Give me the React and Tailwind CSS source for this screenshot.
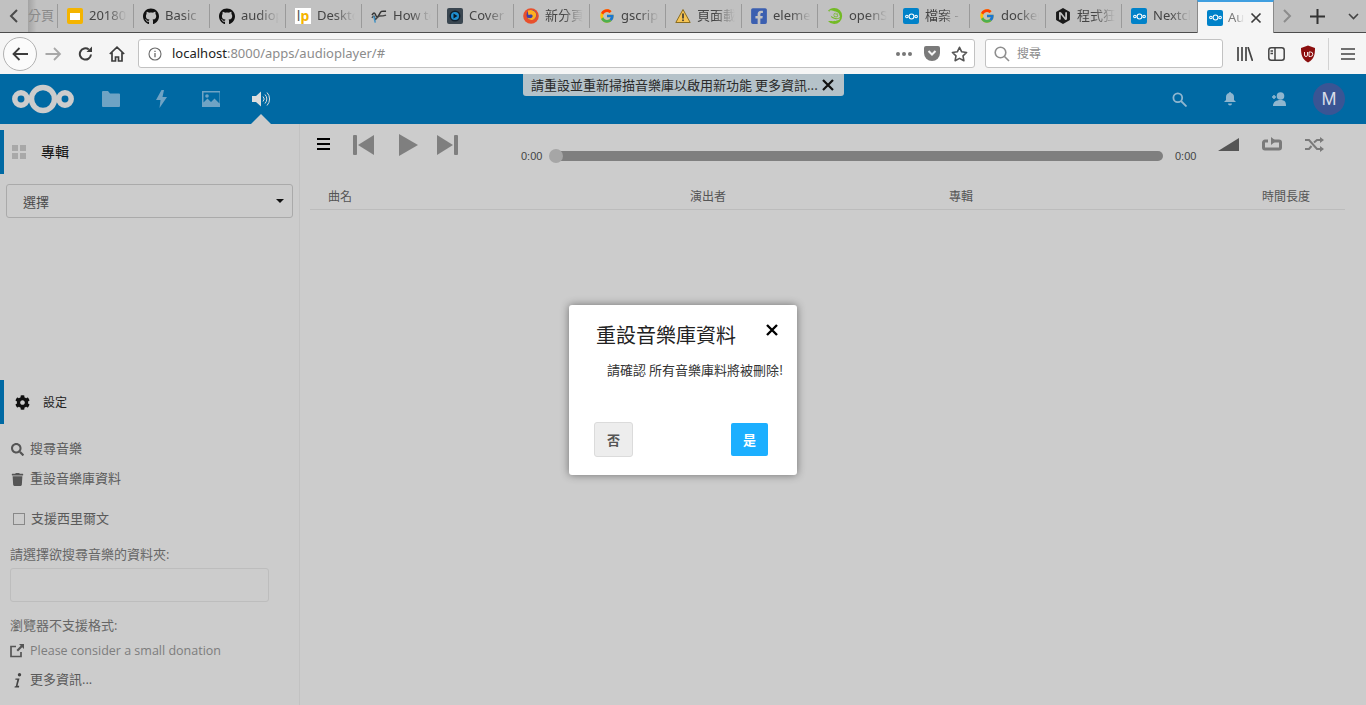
import React from "react";
import { FaGithub, FaFacebookSquare, FaTrash, FaCog, FaSearch } from "react-icons/fa";
import { FcGoogle } from "react-icons/fc";
import { SiOpensuse, SiNginx } from "react-icons/si";

const ncFont = { fontFamily: '"Open Sans","Noto Sans CJK TC",sans-serif' };

function NcLogo({ w = 62, h = 30, color = "#ccc", sw = 5.5 }) {
  return (
    <svg width={w} height={h} viewBox="0 0 62 30" fill="none" stroke={color} strokeWidth={sw}>
      <circle cx="9" cy="15" r="6.2" />
      <circle cx="31" cy="15" r="11.5" />
      <circle cx="53" cy="15" r="6.2" />
    </svg>
  );
}
function NcFav() {
  return (
    <span className="w-4 h-4 rounded-[2px] bg-[#0082c9] flex items-center justify-center">
      <NcLogo w={13} h={7} color="#fff" sw={5} />
    </span>
  );
}
function Slides() {
  return (
    <span className="w-4 h-4 rounded-[2px] bg-[#f4b400] flex items-center justify-center">
      <span className="w-[10px] h-[7px] bg-white block" />
    </span>
  );
}
function Lp() {
  return (
    <span className="w-4 h-4 bg-white flex items-center justify-center text-[14px] leading-none font-bold text-[#f4b400]" style={{ fontFamily: '"Noto Sans",sans-serif' }}>
      <span className="text-[#555] font-normal">l</span>p
    </span>
  );
}
function Wave() {
  return (
    <svg width="17" height="16" viewBox="0 0 17 16" fill="none" strokeWidth="1.5">
      <path d="M1 7c2-3 3-3 4 0s2 3 4-1 3-3 7-3" stroke="#333" />
      <path d="M1 10c2-3 3-2 3 1s3-3 5-3 4 0 7-1" stroke="#444" />
      <path d="M3 8l1.500 7" stroke="#3a8fc4" />
    </svg>
  );
}
function Cover() {
  return (
    <span className="w-4 h-4 rounded-[2px] bg-[#3a4650] flex items-center justify-center">
      <svg width="12" height="12" viewBox="0 0 12 12"><circle cx="6" cy="6" r="5.500" fill="#10202e" /><circle cx="6" cy="6" r="4" fill="#1f8fd0" /><path d="M4.500 3.500v5L8.500 6Z" fill="#0c1a26" /></svg>
    </span>
  );
}
function Firefox() {
  return (
    <svg width="16" height="16" viewBox="0 0 16 16">
      <circle cx="8" cy="8" r="7.800" fill="#e8502c" />
      <circle cx="8.500" cy="7" r="5" fill="#3f3fa8" />
      <path d="M5 2.500c3-1.500 7 0 8 3 .8 3-1 6-4 6.500-2 .3-4-.8-4.500-2.500 1.500 1 3.500 1 4.500 0 1-1 .8-2.500-.5-3-1-.3-2 0-3 .5C5 6 5 4 5 2.500Z" fill="#ffb020" />
    </svg>
  );
}
function Warn() {
  return (
    <svg width="16" height="16" viewBox="0 0 16 16">
      <path d="M8 1.500 15.200 14.500H.8Z" fill="#f6c454" stroke="#8a6d20" strokeWidth="1" strokeLinejoin="round" />
      <rect x="7.200" y="5.500" width="1.600" height="5" fill="#333" />
      <rect x="7.200" y="11.500" width="1.600" height="1.600" fill="#333" />
    </svg>
  );
}

const tabs = [
  { icon: <Slides />, t: "20180" },
  { icon: <FaGithub size={17} color="#111" />, t: "Basic" },
  { icon: <FaGithub size={17} color="#111" />, t: "audiop" },
  { icon: <Lp />, t: "Desktop" },
  { icon: <Wave />, t: "How to" },
  { icon: <Cover />, t: "Cover" },
  { icon: <Firefox />, t: "新分頁" },
  { icon: <FcGoogle size={16} />, t: "gscript" },
  { icon: <Warn />, t: "頁面載" },
  { icon: <FaFacebookSquare size={18} color="#3b5fb0" />, t: "element" },
  { icon: <SiOpensuse size={16} color="#73ba25" />, t: "openSU" },
  { icon: <NcFav />, t: "檔案 -" },
  { icon: <FcGoogle size={16} />, t: "docker" },
  { icon: <SiNginx size={16} color="#1a1a1a" />, t: "程式狂" },
  { icon: <NcFav />, t: "Nextcloud" },
];

function TabBar() {
  return (
    <div className="h-[33px] bg-[#c1c1c1] border-b border-[#4d4d4d] flex text-[13px] text-[#444]" style={{ fontFamily: '"Noto Sans","Noto Sans CJK TC",sans-serif' }}>
      <div className="w-[28px] flex items-center justify-center">
        <svg width="10" height="14" viewBox="0 0 10 14" fill="none" stroke="#4a4a4a" strokeWidth="2"><path d="M8 1 2 7l6 6" /></svg>
      </div>
      <div className="w-[29px] h-[32px] flex items-center overflow-hidden text-[#8a8a8a] bg-gradient-to-r from-[#a3a3a3] to-[#c1c1c1] to-30%">
        <span className="whitespace-nowrap">分頁</span>
      </div>
      {tabs.map((x, i) => (
        <div key={i} className="w-[76px] h-[32px] flex items-center">
          <span className="w-px h-[24px] bg-[#9a9a9a]" />
          <span className="w-[16px] h-4 ml-[9px] flex items-center justify-center">{x.icon}</span>
          <span className="ml-[6px] w-[38px] overflow-hidden whitespace-nowrap [mask-image:linear-gradient(to_right,black_45%,transparent)]">{x.t}</span>
        </div>
      ))}
      <div className="w-[77px] h-[33px] bg-[#f5f5f5] border-t-2 border-[#3f9fe0] border-x border-x-[#8a8a8a] flex items-center pl-[9px]">
        <NcFav />
        <span className="ml-[5px] w-[16px] overflow-hidden text-[#7c7c7c] whitespace-nowrap [mask-image:linear-gradient(to_right,black_50%,transparent)]">Audio</span>
        <svg className="ml-[6px]" width="12" height="12" viewBox="0 0 12 12" stroke="#3d3d3d" strokeWidth="1.700"><path d="M1.500 1.500l9 9M10.500 1.500l-9 9" /></svg>
      </div>
      <div className="flex items-center h-[32px]">
        <svg className="ml-[8px]" width="10" height="14" viewBox="0 0 10 14" fill="none" stroke="#8c8c8c" strokeWidth="2"><path d="M2 1l6 6-6 6" /></svg>
        <svg className="ml-[18px]" width="15" height="15" viewBox="0 0 15 15" stroke="#333" strokeWidth="2"><path d="M7.500 0v15M0 7.500h15" /></svg>
        <svg className="ml-[23px]" width="11" height="7" viewBox="0 0 11 7" fill="none" stroke="#444" strokeWidth="1.600"><path d="M1 1l4.500 4.500L10 1" /></svg>
      </div>
    </div>
  );
}

function NavBar() {
  return (
    <div className="h-[41px] bg-[#f5f5f5] flex items-center" style={{ fontFamily: '"Noto Sans","Noto Sans CJK TC",sans-serif' }}>
      <div className="ml-[3px] w-[34px] h-[34px] rounded-full border border-[#b1b1b1] bg-[#fbfbfb] flex items-center justify-center">
        <svg width="16" height="14" viewBox="0 0 16 14" fill="none" stroke="#3d3d3d" strokeWidth="1.800"><path d="M7.500 1 1.500 7l6 6M1.500 7H16" /></svg>
      </div>
      <svg className="ml-[8px]" width="17" height="14" viewBox="0 0 16 14" fill="none" stroke="#a8a8a8" strokeWidth="1.800"><path d="M8.500 1l6 6-6 6M14.500 7H0" /></svg>
      <svg className="ml-[16px]" width="15" height="15" viewBox="0 0 15 15" fill="none" stroke="#3d3d3d" strokeWidth="2"><path d="M13 8.500A5.600 5.600 0 1 1 10.800 3.500" /><path d="M14 .5V6H8.500Z" fill="#3d3d3d" stroke="none" /></svg>
      <svg className="ml-[16px]" width="16" height="16" viewBox="0 0 16 16" fill="none" stroke="#3d3d3d" strokeWidth="1.700"><path d="M.8 8 8 1.200 15.200 8M3 6.500V15h3.500v-4h3v4H13V6.500" /></svg>
      <div className="ml-[13px] w-[837px] h-[29px] bg-white border border-[#c2c2c2] rounded-[3px] flex items-center">
        <svg className="ml-[9px]" width="14" height="14" viewBox="0 0 14 14" fill="none" stroke="#6a6a6a" strokeWidth="1.100"><circle cx="7" cy="7" r="6" /><path d="M7 6v4.200M7 3.700v1.200" strokeWidth="1.300" /></svg>
        <span className="ml-[10px] text-[13px] text-[#8c8c8c]"><span className="text-[#222]">localhost</span>:8000/apps/audioplayer/#</span>
        <span className="ml-auto flex gap-[2px]">
          <span className="w-[4px] h-[4px] rounded-full bg-[#777]" />
          <span className="w-[4px] h-[4px] rounded-full bg-[#777]" />
          <span className="w-[4px] h-[4px] rounded-full bg-[#777]" />
        </span>
        <svg className="ml-[12px]" width="16" height="15" viewBox="0 0 16 15"><path d="M2 0h12a2 2 0 0 1 2 2v5a8 8 0 0 1-16 0V2a2 2 0 0 1 2-2Z" fill="#7a7a7a" /><path d="M4.500 5 8 8.500 11.500 5" fill="none" stroke="#f5f5f5" strokeWidth="2" /></svg>
        <svg className="ml-[11px] mr-[6px]" width="17" height="16" viewBox="0 0 17 16" fill="none" stroke="#555" strokeWidth="1.600" strokeLinejoin="round"><path d="M8.500 1.300l2.200 4.500 4.900.7-3.600 3.400.9 4.800-4.400-2.300-4.400 2.300.9-4.800L1.400 6.500l4.900-.7Z" /></svg>
      </div>
      <div className="ml-[10px] w-[238px] h-[29px] bg-white border border-[#c2c2c2] rounded-[3px] flex items-center">
        <svg className="ml-[8px]" width="16" height="16" viewBox="0 0 16 16" fill="none" stroke="#8e8e8e" strokeWidth="1.600"><circle cx="6.500" cy="6.500" r="5.300" /><path d="M10.500 10.500 15 15" /></svg>
        <span className="ml-[7px] text-[12px] text-[#8c8c8c]">搜尋</span>
      </div>
      <svg className="ml-[14px]" width="16" height="14" viewBox="0 0 16 14" stroke="#444" strokeWidth="1.700" fill="none"><path d="M1 0v14M5 0v14M9 0v14M11 0l4.500 14" /></svg>
      <svg className="ml-[15px]" width="17" height="14" viewBox="0 0 17 14" stroke="#444" strokeWidth="1.500" fill="none"><rect x=".8" y=".8" width="15.400" height="12.400" rx="2.500" /><path d="M7 1v12M2.500 4H5M2.500 6.500H5" /></svg>
      <svg className="ml-[15px]" width="16" height="18" viewBox="0 0 16 18"><path d="M8 .5 15 3c0 7-1 11-7 14.500C2 14 1 10 1 3Z" fill="#8b0f0f" /><path d="M4.500 7v3a1.500 1.500 0 0 0 3 0V7M9 7v4.500h1.500a2.200 2.200 0 0 0 0-4.500Z" fill="none" stroke="#fff" strokeWidth=".9" /></svg>
      <span className="ml-[12px] w-px h-[32px] bg-[#d2d2d2]" />
      <svg className="ml-[12px]" width="14" height="12" viewBox="0 0 14 12" stroke="#444" strokeWidth="1.600"><path d="M0 1h14M0 6h14M0 11h14" /></svg>
    </div>
  );
}

const Dim = "#8fb6cf";
function Header() {
  return (
    <div className="relative h-[50px] bg-[#0069a3] flex items-center" style={ncFont}>
      <span className="ml-[12px] mr-[27px]"><NcLogo /></span>
      <span className="w-[20px] h-[20px] flex items-center justify-center mr-[30px]">
        <svg width="18" height="16" viewBox="0 0 18 16"><path d="M0 1a1 1 0 0 1 1-1h5l2 2.500h9a1 1 0 0 1 1 1V15a1 1 0 0 1-1 1H1a1 1 0 0 1-1-1Z" fill="#6fa3c4" /></svg>
      </span>
      <span className="w-[20px] h-[20px] flex items-center justify-center mr-[30px]">
        <svg width="12" height="18" viewBox="0 0 12 18"><path d="M6.500 0 1 10h4.500L4.500 18 12 7H7.500L9 0Z" fill="#6fa3c4" /></svg>
      </span>
      <span className="w-[20px] h-[20px] flex items-center justify-center mr-[31px]">
        <svg width="18" height="16" viewBox="0 0 18 16"><path d="M0 0h18v16H0Zm1.500 1.500v10l4-4 3.500 3.500 3.500-3.500 5 5V1.500Z" fill="#6fa3c4" /><circle cx="5" cy="5" r="1.800" fill="#6fa3c4" /></svg>
      </span>
      <span className="w-[20px] h-[20px] flex items-center justify-center">
        <svg width="20" height="16" viewBox="0 0 20 16" fill="none"><path d="M0 5h4l5-4.500v15L4 11H0Z" fill="#ddd" /><path d="M11 5.500a3.500 3.500 0 0 1 0 5M13 3.500a6.500 6.500 0 0 1 0 9M15 1.500a9.500 9.500 0 0 1 0 13" stroke="#ddd" strokeWidth="1" /></svg>
      </span>
      <svg className="absolute left-[251px] bottom-0" width="20" height="10" viewBox="0 0 20 10"><path d="M0 10 10 0l10 10Z" fill="#ccc" /></svg>

      <div className="absolute left-[523px] top-0 w-[321px] h-[22px] bg-[#b5c2c9] rounded-b-[3px] flex items-center pl-[8px] text-[13px] text-[#2a2a2a]" style={{ fontFamily: '"Noto Sans CJK TC",sans-serif' }}>
        <span className="whitespace-nowrap">請重設並重新掃描音樂庫以啟用新功能 更多資訊...</span>
        <svg className="ml-[4px]" width="12" height="12" viewBox="0 0 12 12" stroke="#111" strokeWidth="2.200"><path d="M1 1l10 10M11 1 1 11" /></svg>
      </div>

      <div className="ml-auto flex items-center">
        <svg width="15" height="15" viewBox="0 0 15 15" fill="none" stroke={Dim} strokeWidth="1.800"><circle cx="5.800" cy="5.800" r="4.400" /><path d="M9 9l5.500 5.500" /></svg>
        <svg className="ml-[37px]" width="12" height="14" viewBox="0 0 12 14"><path d="M6 0a1 1 0 0 1 1 1c2 .5 3 2 3 4v3l2 2H0l2-2V5c0-2 1-3.500 3-4a1 1 0 0 1 1-1ZM4 11.500h4a2 2 0 0 1-4 0Z" fill={Dim} /></svg>
        <svg className="ml-[36px]" width="14" height="14" viewBox="0 0 14 14"><circle cx="8.500" cy="4" r="3.800" fill={Dim} /><path d="M1 14c0-4 3-6 7.500-6S14 10 14 14Z" fill={Dim} /><path d="M0 5h4M2 3v4" stroke={Dim} strokeWidth="1.500" /></svg>
        <span className="ml-[27px] mr-[21px] w-[32px] h-[32px] rounded-full bg-[#3a5594] text-[#d8dde8] text-[18px] flex items-center justify-center" style={{ fontFamily: '"Liberation Sans",sans-serif' }}>M</span>
      </div>
    </div>
  );
}

function Row({ icon, children, cls = "" }) {
  return (
    <div className={`flex items-center h-[20px] text-[13px] text-[#5a5a5a] ${cls}`}>
      <span className="w-[20px] flex justify-start">{icon}</span>
      <span className="whitespace-nowrap">{children}</span>
    </div>
  );
}

function Sidebar() {
  return (
    <aside className="w-[300px] border-r border-[#c2c2c2] flex flex-col h-full" style={ncFont}>
      <div className="mt-[6px] h-[44px] border-l-4 border-[#0069a3] flex items-center">
        <span className="ml-[8px] grid grid-cols-2 gap-[2px]">
          <span className="w-[6px] h-[6px] bg-[#a8a8a8]" /><span className="w-[6px] h-[6px] bg-[#a8a8a8]" />
          <span className="w-[6px] h-[6px] bg-[#a8a8a8]" /><span className="w-[6px] h-[6px] bg-[#a8a8a8]" />
        </span>
        <span className="ml-[15px] mb-[2px] text-[14px] text-[#111]" style={{ fontFamily: '"Noto Sans CJK TC",sans-serif' }}>專輯</span>
      </div>
      <div className="ml-[6px] mt-[10px] w-[287px] h-[34px] border border-[#aaa] rounded-[3px] flex items-center pl-[16px] pr-[8px] text-[13px] text-[#4a4a4a]">
        <span className="pt-[3px]">選擇</span>
        <svg className="ml-auto" width="8" height="4" viewBox="0 0 8 4"><path d="M0 0h8L4 4Z" fill="#111" /></svg>
      </div>
      <div className="mt-[162px] h-[44px] border-l-4 border-[#0069a3] flex items-center">
        <FaCog className="ml-[11px]" size={15} color="#111" />
        <span className="ml-[13px] pt-[2px] text-[12px] text-[#222]">設定</span>
      </div>
      <div className="pl-[10px]">
        <Row cls="mt-[15px]" icon={<FaSearch size={13} color="#555" className="ml-px" />}>搜尋音樂</Row>
        <Row cls="mt-[10px]" icon={<FaTrash size={13} color="#555" className="ml-px" />}>重設音樂庫資料</Row>
        <div className="mt-[20px] flex items-center h-[20px] text-[13px] text-[#5a5a5a]">
          <span className="ml-[3px] w-[12px] h-[12px] border border-[#888] block" />
          <span className="ml-[6px]">支援西里爾文</span>
        </div>
        <div className="mt-[15px] h-[20px] flex items-center pt-[2px] text-[13px] text-[#666]">請選擇欲搜尋音樂的資料夾:</div>
        <div className="mt-[4px] w-[259px] h-[34px] border border-[#bdbdbd] rounded-[3px]" />
        <div className="mt-[13px] h-[20px] flex items-center pt-[2px] text-[13px] text-[#666]">瀏覽器不支援格式:</div>
        <Row cls="mt-[5px] pt-[2px] !text-[12.5px] !text-[#7d7d7d]" icon={
          <svg width="14" height="14" viewBox="0 0 14 14" fill="none" stroke="#555" strokeWidth="1.700"><path d="M6 2.500H1v10h10V8" /><path d="M9 0h5v5L12.200 3.300 8 7.500 6.500 6l4.200-4.200Z" fill="#555" stroke="none" /></svg>
        }>Please consider a small donation</Row>
        <Row cls="mt-[10px]" icon={
          <svg className="ml-[4px]" width="8" height="15" viewBox="0 0 8 15" fill="#444"><circle cx="5.500" cy="1.800" r="1.700" /><path d="M1.500 5.500H5.500L3.500 12.800H5.200L5 14.500H.5L.8 13.200H1.800L3.300 6.800H1.300Z" /></svg>
        }>更多資訊...</Row>
      </div>
    </aside>
  );
}

function Player() {
  return (
    <div className="h-[56px] flex items-start text-[#444]">
      <svg className="ml-[7px] mt-[14px]" width="13" height="12" viewBox="0 0 13 12" fill="#000"><path d="M0 0h13v2H0ZM0 5h13v2H0ZM0 10h13v2H0Z" /></svg>
      <svg className="ml-[23px] mt-[11px]" width="21" height="20" viewBox="0 0 21 20" fill="#7f7f7f"><rect width="4" height="20" rx="1" /><path d="M21 0v20L5 10Z" /></svg>
      <svg className="ml-[25px] mt-[10px]" width="19" height="22" viewBox="0 0 19 22" fill="#7f7f7f"><path d="M0 0l19 11L0 22Z" /></svg>
      <svg className="ml-[19px] mt-[11px]" width="21" height="20" viewBox="0 0 21 20" fill="#7f7f7f"><rect x="17" width="4" height="20" rx="1" /><path d="M0 0v20l16-10Z" /></svg>
      <span className="ml-[63px] mt-[25px] text-[11px] leading-[14px] w-[30px]" style={{ fontFamily: '"Liberation Sans",sans-serif' }}>0:00</span>
      <div className="relative mt-[27px] w-[612px] h-[10px] rounded-full bg-[#7f7f7f]">
        <span className="absolute -left-[2px] -top-[2px] w-[14px] h-[14px] rounded-full bg-[#a6a6a6]" />
      </div>
      <span className="ml-[12px] mt-[25px] text-[11px] leading-[14px] w-[22px]" style={{ fontFamily: '"Liberation Sans",sans-serif' }}>0:00</span>
      <svg className="ml-[21px] mt-[14px]" width="21" height="13" viewBox="0 0 21 13"><path d="M0 13 21 0v13Z" fill="#555" /></svg>
      <svg className="ml-[23px] mt-[13px]" width="20" height="14" viewBox="0 0 20 14" fill="none" stroke="#7a7a7a" strokeWidth="3"><path d="M6 4H3a1.500 1.500 0 0 0-1.500 1.500v5A1.500 1.500 0 0 0 3 12h14a1.500 1.500 0 0 0 1.500-1.500v-5A1.500 1.500 0 0 0 17 4h-6" /><path d="M9 0v8l5-4Z" fill="#7a7a7a" stroke="none" /></svg>
      <svg className="ml-[23px] mt-[13px]" width="19" height="15" viewBox="0 0 19 15" fill="none" stroke="#7a7a7a" strokeWidth="2"><path d="M0 3h4l8 9h3M0 12h4l2.500-3M9 5.500 12 3h3" /><path d="M15 0l4 3-4 3ZM15 9l4 3-4 3Z" fill="#7a7a7a" stroke="none" /></svg>
    </div>
  );
}

function Main() {
  return (
    <main className="flex-1 pl-[10px]" style={ncFont}>
      <Player />
      <div className="mt-[7px] w-[1035px] h-[23px] pb-[2px] border-b border-[#bcbcbc] flex items-center text-[12px] text-[#555]">
        <span className="ml-[18px] w-[362px]">曲名</span>
        <span className="w-[259px]">演出者</span>
        <span className="w-[313px]">專輯</span>
        <span>時間長度</span>
      </div>
    </main>
  );
}

function Modal() {
  return (
    <div className="absolute left-[569px] top-[305px] w-[228px] h-[170px] bg-white rounded-[3px] shadow-[0_0_8px_rgba(0,0,0,0.45)]" style={{ fontFamily: '"Noto Sans CJK TC",sans-serif' }}>
      <div className="flex items-start">
        <div className="ml-[27px] mt-[16px] text-[20px] leading-[28px] text-[#222] whitespace-nowrap">重設音樂庫資料</div>
        <svg className="ml-[30px] mt-[19px]" width="12" height="12" viewBox="0 0 12 12" stroke="#000" strokeWidth="2.400"><path d="M1 1l10 10M11 1 1 11" /></svg>
      </div>
      <div className="ml-[38px] mt-[12px] text-[13px] leading-[18px] text-[#333] whitespace-nowrap">請確認 所有音樂庫料將被刪除!</div>
      <div className="mt-[43px] ml-[25px] flex items-start">
        <div className="w-[39px] h-[35px] bg-[#ededed] border border-[#dbdbdb] rounded-[3px] flex items-center justify-center text-[13px] font-bold text-[#555]">否</div>
        <div className="ml-[98px] mt-px w-[37px] h-[33px] bg-[#1cafff] rounded-[2px] flex items-center justify-center text-[13px] font-bold text-white">是</div>
      </div>
    </div>
  );
}

export default function App() {
  return (
    <div className="relative w-[1366px] h-[705px] overflow-hidden bg-[#ccc]">
      <TabBar />
      <NavBar />
      <Header />
      <div className="flex h-[581px]">
        <Sidebar />
        <Main />
      </div>
      <Modal />
    </div>
  );
}
